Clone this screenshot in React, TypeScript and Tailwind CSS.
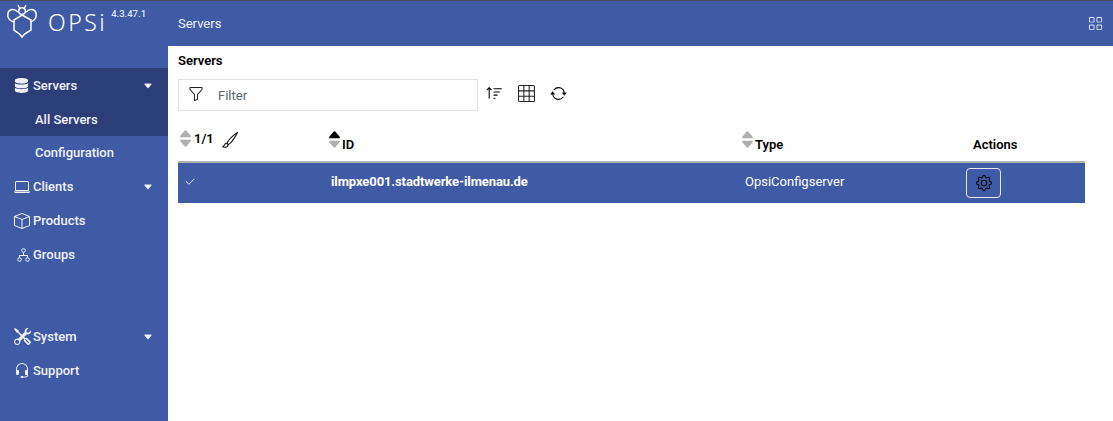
import type { ReactNode } from 'react';
import {
  BsBox,
  BsBrush,
  BsCaretDownFill,
  BsCaretUpFill,
  BsCheck2,
  BsFunnel,
  BsGear,
  BsGrid,
  BsGrid3X3,
  BsHeadset,
  BsLaptop,
  BsSortUp,
  BsArrowRepeat,
  BsTools,
} from 'react-icons/bs';
import { FaDatabase } from 'react-icons/fa';

function Logo() {
  return (
    <svg width="36" height="35" viewBox="6 4 36 35" fill="none" stroke="#fff" strokeWidth="1.5" className="shrink-0">
      {/* wings */}
      <path d="M18 12 C14 8 9 9 8 13 C7 17 9 21 14 22" />
      <path d="M26 12 C30 8 35 9 36 13 C37 17 35 21 30 22" />
      {/* body */}
      <path d="M22 15 L31 20 L31 30 L24.5 34 L22 37 L19.5 34 L14 30 L14 20 Z" />
      {/* head */}
      <circle cx="22" cy="11" r="3.3" />
      <path d="M19.5 8 L18 5 M24.5 8 L26 5" />
    </svg>
  );
}

function GroupsIcon() {
  return (
    <svg width="13" height="14" viewBox="0 0 13 14" fill="none" stroke="currentColor" strokeWidth="1">
      <circle cx="6.5" cy="2.5" r="1.8" />
      <path d="M6.5 4.5 V7 M2.5 9.5 V7.5 H10.5 V9.5" />
      <circle cx="2.5" cy="11.5" r="1.8" />
      <circle cx="10.5" cy="11.5" r="1.8" />
    </svg>
  );
}

function NavRow({ icon, label, caret }: { icon: ReactNode; label: string; caret?: boolean }) {
  return (
    <div className="h-[34px] flex items-center pl-[14px] pr-[15px] pt-[1px] text-[13px] font-medium text-[#eef1f8]">
      <span className="w-[19px] flex items-center justify-start text-[#eef1f8] shrink-0">{icon}</span>
      <span className="flex-1">{label}</span>
      {caret && <BsCaretDownFill className="text-[10px] text-[#eef1f8]" />}
    </div>
  );
}

function SubRow({ label, active }: { label: string; active?: boolean }) {
  return (
    <div className={`flex items-center pl-[35px] text-[13px] font-medium text-[#eef1f8] ${active ? 'h-[34px] pt-[1px] bg-[#2c3e78]' : 'h-[33px]'}`}>
      {label}
    </div>
  );
}

function SortArrows({ up }: { up?: boolean }) {
  return (
    <span className="flex flex-col items-center shrink-0 text-[15px] leading-none">
      <BsCaretUpFill className={up ? '-mb-[5px] text-black' : '-mb-[5px] text-[#b0b0b0]'} />
      <BsCaretDownFill className="text-[#b0b0b0]" />
    </span>
  );
}

export default function App() {
  return (
    <div className="font-['Roboto',sans-serif] w-[1113px] h-[421px] flex bg-white overflow-hidden">
      {/* Sidebar */}
      <aside className="w-[168px] shrink-0 bg-[#3f5ba6] border-t border-[#4a4f5c] flex flex-col">
        <div className="h-[67px] flex items-start pl-[6px] pt-[3px] text-white">
          <Logo />
          <span className="ml-[6px] mt-[5px] text-[23px] leading-[26px] font-light tracking-[2.5px] font-['Noto_Sans',sans-serif]">OPSi</span>
          <span className="ml-[4px] mt-[4px] text-[9.5px] leading-[12px] font-medium text-[#dfe4f2]">4.3.47.1</span>
        </div>
        <div className="bg-[#2c3e78]">
          <NavRow icon={<FaDatabase className="text-[15px]" />} label="Servers" caret />
        </div>
        <SubRow label="All Servers" active />
        <SubRow label="Configuration" />
        <NavRow icon={<BsLaptop className="text-[16px]" />} label="Clients" caret />
        <NavRow icon={<BsBox className="text-[16px]" />} label="Products" />
        <NavRow icon={<span className="ml-[3px]"><GroupsIcon /></span>} label="Groups" />
        <div className="h-[48px]" />
        <NavRow icon={<BsTools className="text-[17px]" />} label="System" caret />
        <NavRow icon={<BsHeadset className="text-[16px]" />} label="Support" />
      </aside>

      {/* Main */}
      <div className="flex-1 flex flex-col min-w-0">
        <header className="h-[46px] shrink-0 bg-[#3f5ba6] border-t border-[#4a4f5c] flex items-center justify-between pl-[10px] pr-[10px] text-white">
          <span className="text-[13px] text-[#eef1f8]">Servers</span>
          <BsGrid className="text-[15px] text-[#dfe4f2]" />
        </header>

        <main className="pl-[10px] pr-[28px]">
          <div className="h-[33px] flex items-center pb-[3px] text-[13px] font-semibold text-black">Servers</div>

          <div className="flex items-center">
            <div className="w-[300px] h-[32px] border border-[#e3e3e3] flex items-center pl-[9px]">
              <BsFunnel className="text-[16px] text-[#222] -mt-[3px]" />
              <span className="ml-[14px] mt-[1px] text-[13px] text-[#5a6472]">Filter</span>
            </div>
            <BsSortUp className="ml-[8px] -mt-[4px] text-[17px] text-black" />
            <BsGrid3X3 className="ml-[15px] -mt-[4px] text-[17px] text-[#222]" />
            <BsArrowRepeat className="ml-[15px] -mt-[4px] text-[17px] text-black" />
          </div>

          <div className="h-[52px] grid grid-cols-[150px_413px_232px_112px] border-b-2 border-[#b3b3b3] text-[13px] font-semibold text-black">
            <div className="flex items-end pb-[10px]">
              <SortArrows />
              <span className="ml-[1px] mb-[3px]">1/1</span>
              <BsBrush className="ml-[8px] mb-[3px] text-[16px]" />
            </div>
            <div className="flex items-end pb-[7px] -ml-[1px]">
              <span className="mb-[2px]"><SortArrows up /></span>
              <span>ID</span>
            </div>
            <div className="flex items-end pb-[7px] -ml-[1px]">
              <span className="mb-[2px]"><SortArrows /></span>
              <span>Type</span>
            </div>
            <div className="flex items-end pb-[7px]">Actions</div>
          </div>

          <div className="h-[40px] grid grid-cols-[150px_413px_232px_112px] items-center bg-[#3f5ba6] text-white text-[13px]">
            <div className="pl-[6px] pb-[2px]"><BsCheck2 className="text-[12px] text-[#dfe4f2]" /></div>
            <div className="font-bold pl-[3px] pb-[3px] tracking-[-0.1px]">ilmpxe001.stadtwerke-ilmenau.de</div>
            <div className="pl-[4px] pb-[3px]">OpsiConfigserver</div>
            <div className="-ml-[7px]">
              <div className="w-[35px] h-[30px] rounded-[4px] border border-[#e6e9f3] flex items-center justify-center">
                <BsGear className="text-[16px] text-black" />
              </div>
            </div>
          </div>
        </main>
      </div>
    </div>
  );
}
